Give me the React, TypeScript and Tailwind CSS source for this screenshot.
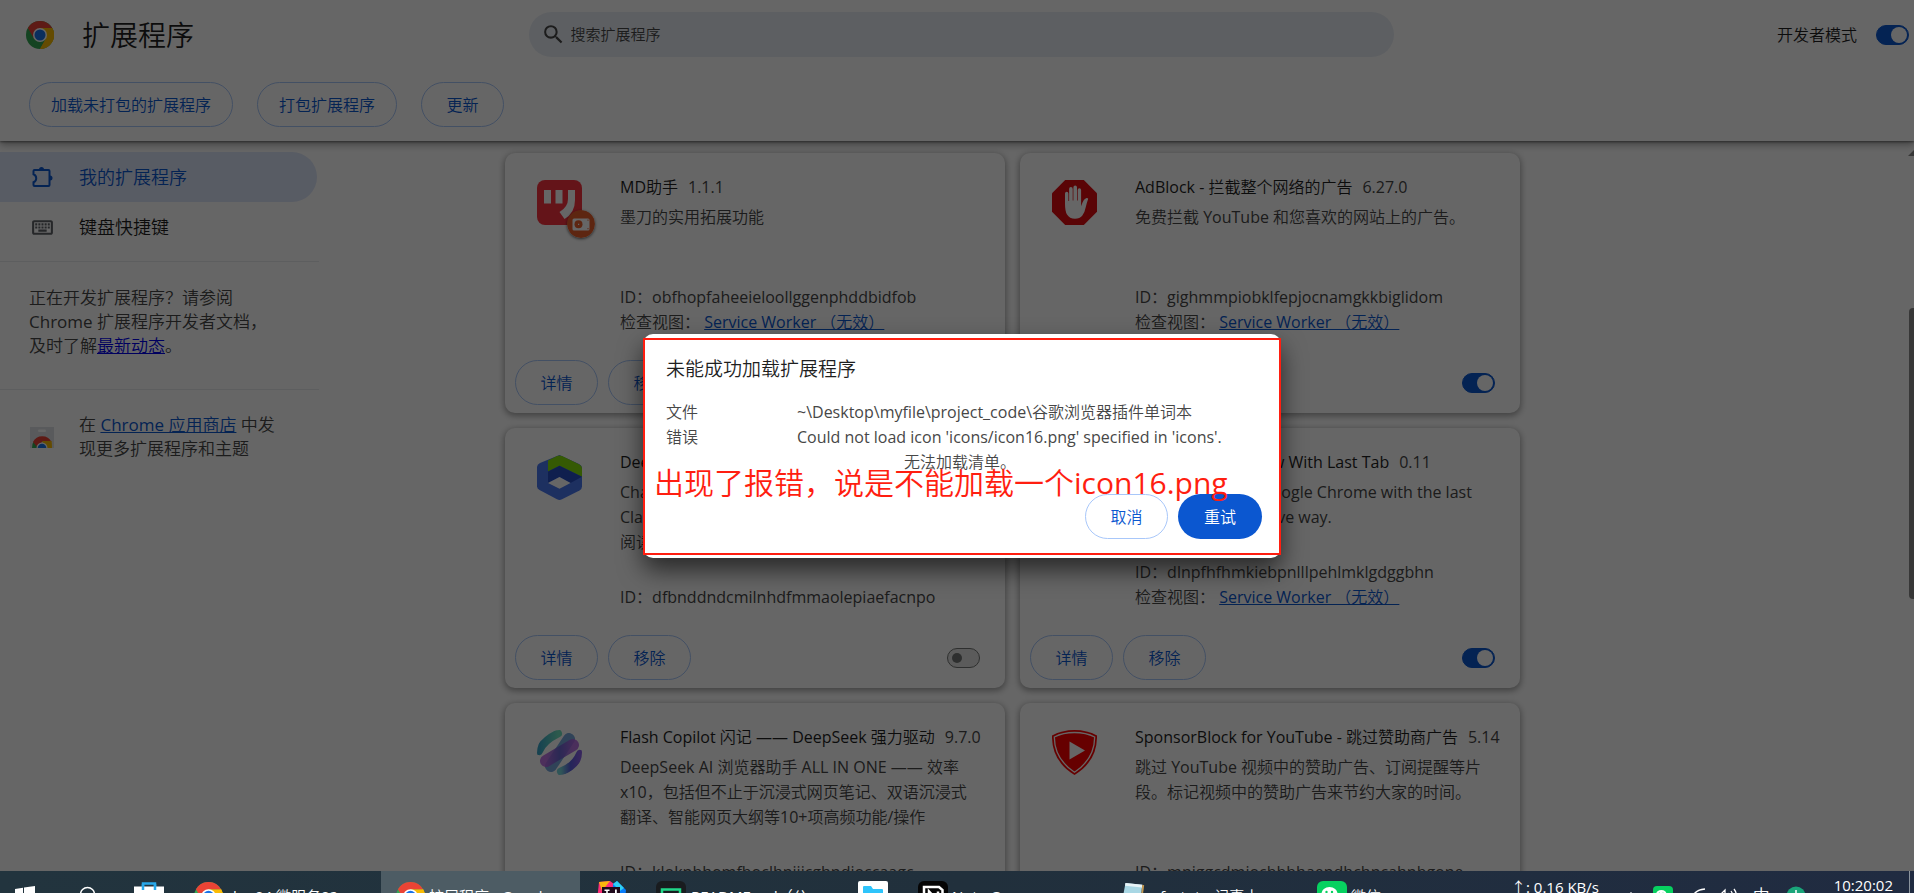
import React from "react";
import { MdSearch, MdOutlineKeyboard } from "react-icons/md";

function ChromeLogo({ className }: { className?: string }) {
  return (
    <svg viewBox="0 0 48 48" className={className} aria-hidden="true">
      <circle cx="24" cy="24" r="24" fill="#34a853" />
      <path d="M24 24 44.8 12A24 24 0 0 1 24 48L34.4 30Z" fill="#fbbc04" />
      <path d="M24 48 34.4 30 24 12H44.8A24 24 0 0 1 24 48Z" fill="#fbbc04" />
      <path d="M3.2 12A24 24 0 0 1 44.8 12H24L13.6 30Z" fill="#ea4335" />
      <circle cx="24" cy="24" r="12" fill="#fff" />
      <circle cx="24" cy="24" r="9.4" fill="#1a73e8" />
    </svg>
  );
}

function PuzzleIcon() {
  return (
    <svg viewBox="0 0 24 24" className="size-6" aria-hidden="true">
      <path
        d="M3.500 5H17.500Q18.500 5 18.500 6V20Q18.500 21 17.500 21H3.500Q2.500 21 2.500 20V17.200A4.300 4.300 0 0 0 2.500 9.200V6Q2.500 5 3.500 5Z"
        fill="none"
        stroke="#0b57d0"
        strokeWidth="2"
      />
      <path d="M8 4.500a2.500 2.500 0 0 1 5 0ZM19 10.500a2.500 2.500 0 0 1 0 5Z" fill="#0b57d0" />
    </svg>
  );
}

function StoreIcon() {
  return (
    <svg viewBox="0 0 24 21" className="h-[21px] w-6 shrink-0" aria-hidden="true">
      <rect width="24" height="21" fill="#dfe1e5" />
      <rect x="8" y="2.5" width="8" height="2.5" rx="1.2" fill="#fff" />
      <path d="M2 21a10 10 0 0 1 2-7l5 7Z" fill="#34a853" />
      <path d="M3 15a10.300 10.300 0 0 1 18.500 0H12L8 21Z" fill="#ea4335" />
      <path d="M12 14h9.500q.5 3 .5 7h-7Z" fill="#fbbc04" />
      <path d="M6.500 21a5.500 5.500 0 0 1 11 0Z" fill="#fff" />
      <path d="M7.700 21a4.300 4.300 0 0 1 8.600 0Z" fill="#1a73e8" />
    </svg>
  );
}

function ModaoIcon() {
  return (
    <div className="relative size-[45px]">
      <svg viewBox="0 0 45 45" className="size-[45px]" aria-hidden="true">
        <rect width="45" height="45" rx="8" fill="#fa3440" />
        <path d="M7 10h7v13.500H7ZM18.500 10h7v13.500h-7Z" fill="#fff" />
        <path d="M31 10h7v10q0 13-10.500 19l-5-7Q31 27 31 19Z" fill="#fff" />
      </svg>
      <svg
        viewBox="0 0 28 28"
        className="absolute -right-[13px] -bottom-[13px] size-7 rounded-full shadow-[0_1px_3px_rgba(0,0,0,.6)]"
        aria-hidden="true"
      >
        <circle cx="14" cy="14" r="14" fill="#e8602c" />
        <rect x="5.500" y="8.500" width="17" height="12" rx="1.500" fill="#fff" />
        <circle cx="11.500" cy="14.300" r="4" fill="#e8602c" />
        <path d="M11 13.800h1.200V15H11Z" fill="#fff" />
        <path d="M20.500 9.500h1v1.200h-1ZM20.500 18h1v1.200h-1Z" fill="#e8602c" />
      </svg>
    </div>
  );
}

function AdBlockIcon() {
  return (
    <svg viewBox="0 0 45 45" className="size-[45px]" aria-hidden="true">
      <path d="M13.200 0h18.600L45 13.200v18.600L31.800 45H13.200L0 31.800V13.200Z" fill="#e00a10" />
      <path
        d="M13 24V13.500q0-1.800 1.700-1.800t1.700 1.800V21h.7V9q0-1.900 1.800-1.900T20.700 9v11.500h.7V7.400q0-1.800 1.800-1.800T25 7.400v13.100h.7V10q0-1.800 1.700-1.800T29.100 10v16.200l1.400-3.600q1.300-3.600 3.500-4.400 1.700-.4 2.200.5-1.400 4-2.400 8.300-1 5.500-3.600 8.800-2.400 3-7.200 3-5.500 0-8-4.200Q13 31 13 24Z"
        fill="#fff"
      />
    </svg>
  );
}

function HexIcon() {
  return (
    <svg viewBox="0 0 45 45" className="size-[45px]" aria-hidden="true">
      <path d="M3 8 22.500 0 42 9q3 1.500 3 4v18.500q0 2.500-2.500 4L25 44.300q-2.500 1.200-5 0L2.500 35Q0 33.600 0 31.500V12q0-2.500 3-4Z" fill="#4a78f0" />
      <path d="M11 5.500 20 1q2.500-1.200 5 0l17.500 8.500q2.500 1.500 2.500 4v8.200L22.500 10.800 11 16.500Z" fill="#86e00a" />
      <path d="M11 16.500 22.500 10.800 45 21.700 33.500 28 22.500 22 11 28Z" fill="#274fc4" />
      <path d="M11 28 22.500 22l11 6-11 5.800Z" fill="#fff" />
    </svg>
  );
}

function FlashIcon() {
  return (
    <svg viewBox="0 0 45 45" className="size-[45px]" aria-hidden="true">
      <defs>
        <linearGradient id="fa" x1="0" x2="1">
          <stop offset="0" stopColor="#3aa6c9" />
          <stop offset="1" stopColor="#6fe0c0" />
        </linearGradient>
        <linearGradient id="fb" x1="0" x2="1">
          <stop offset="0" stopColor="#b65fe0" />
          <stop offset=".5" stopColor="#6a5bd0" />
          <stop offset="1" stopColor="#b05fe0" />
        </linearGradient>
        <linearGradient id="fc" x1="0" x2="1">
          <stop offset="0" stopColor="#78d6dc" />
          <stop offset=".5" stopColor="#5a5ce0" />
          <stop offset="1" stopColor="#8a60e8" />
        </linearGradient>
        <clipPath id="fd">
          <circle cx="22.500" cy="22.500" r="22.500" />
        </clipPath>
      </defs>
      <g clipPath="url(#fd)" fill="none" strokeLinecap="round">
        <path d="M2 21Q6 11 21 3.500" stroke="url(#fa)" strokeWidth="8" />
        <path d="M32 9 14 36" stroke="#78a9dc" strokeWidth="12" />
        <path d="M9 31 36 15" stroke="url(#fb)" strokeWidth="12" opacity=".85" />
        <path d="M24 41.500Q38 36 43 24" stroke="url(#fc)" strokeWidth="8" />
      </g>
    </svg>
  );
}

function TabIcon() {
  return (
    <svg viewBox="0 0 45 45" className="size-[45px]" aria-hidden="true">
      <circle cx="22.500" cy="22.500" r="22" fill="#4285f4" />
      <path d="M12 16h21v14H12Z" fill="#fff" />
    </svg>
  );
}

function ShieldIcon() {
  return (
    <svg viewBox="0 0 45 45" className="size-[45px]" aria-hidden="true">
      <path d="M22.500 0Q35 0 45 5.500 45.500 31 22.500 45-.5 31 0 5.500 10 0 22.500 0Z" fill="#f00" />
      <path
        d="M22.500 2.500Q34 2.500 42.700 7 42.500 29 22.500 42.300 2.500 29 2.300 7 11 2.500 22.500 2.500Z"
        fill="none"
        stroke="#fff"
        strokeWidth="1.300"
      />
      <path d="M17.500 11.500 33 20.500 17.500 29.500Z" fill="#fff" />
    </svg>
  );
}

function Toggle({ on, label }: { on: boolean; label: string }) {
  return (
    <input
      type="checkbox"
      defaultChecked={on}
      aria-label={label}
      className="relative h-5 w-[33px] shrink-0 appearance-none rounded-full border border-[#747775] bg-[#e3e3e3] before:absolute before:top-1 before:left-1 before:size-[10px] before:rounded-full before:bg-[#747775] checked:border-[#0b57d0] checked:bg-[#0b57d0] checked:before:top-[1px] checked:before:left-[14px] checked:before:size-4 checked:before:bg-white"
    />
  );
}

const pill =
  "h-[45px] min-w-[83px] shrink-0 rounded-full border border-[#a8c7fa] px-[21px] text-[16px] text-[#0b57d0]";

type Extension = {
  icon: React.ReactNode;
  name: string;
  version: string;
  lines: string[];
  id: string;
  worker: boolean;
  on: boolean;
};

const extensions: Extension[] = [
  {
    icon: <ModaoIcon />,
    name: "MD助手",
    version: "1.1.1",
    lines: ["墨刀的实用拓展功能"],
    id: "obfhopfaheeieloollggenphddbidfob",
    worker: true,
    on: true,
  },
  {
    icon: <AdBlockIcon />,
    name: "AdBlock - 拦截整个网络的广告",
    version: "6.27.0",
    lines: ["免费拦截 YouTube 和您喜欢的网站上的广告。"],
    id: "gighmmpiobklfepjocnamgkkbiglidom",
    worker: true,
    on: true,
  },
  {
    icon: <HexIcon />,
    name: "DeepSider",
    version: "1.0",
    lines: ["ChatGPT", "Claude", "阅读"],
    id: "dfbnddndcmilnhdfmmaolepiaefacnpo",
    worker: false,
    on: false,
  },
  {
    icon: <TabIcon />,
    name: "Don't Close Window With Last Tab",
    version: "0.11",
    lines: ["Prevents closing Google Chrome with the last", "tab in an unobtrusive way."],
    id: "dlnpfhfhmkiebpnlllpehlmklgdggbhn",
    worker: true,
    on: true,
  },
  {
    icon: <FlashIcon />,
    name: "Flash Copilot 闪记 —— DeepSeek 强力驱动",
    version: "9.7.0",
    lines: [
      "DeepSeek AI 浏览器助手 ALL IN ONE —— 效率",
      "x10，包括但不止于沉浸式网页笔记、双语沉浸式",
      "翻译、智能网页大纲等10+项高频功能/操作",
    ],
    id: "kloknbhomfboclhnijicghndjoccaagc",
    worker: false,
    on: true,
  },
  {
    icon: <ShieldIcon />,
    name: "SponsorBlock for YouTube - 跳过赞助商广告",
    version: "5.14",
    lines: ["跳过 YouTube 视频中的赞助广告、订阅提醒等片", "段。标记视频中的赞助广告来节约大家的时间。"],
    id: "mnjggcdmjocbbbhaepdhchncahnbgone",
    worker: false,
    on: true,
  },
];

function Card({ ext }: { ext: Extension }) {
  return (
    <article className="flex h-[260px] flex-col rounded-[10px] bg-white pb-2 shadow-[0_2px_6px_1px_rgba(0,0,0,.35)]">
      <div className="flex min-h-0 flex-1 pt-[27px] pl-8">
        <div className="w-[83px] shrink-0">{ext.icon}</div>
        <div className="-mt-[5px] flex min-w-0 flex-1 flex-col whitespace-nowrap pb-[25px] text-[16px] leading-[25px] text-[#474747]">
          <h2 className="flex gap-[10px]">
            <span className="text-[#1f1f1f]">{ext.name}</span>
            <span>{ext.version}</span>
          </h2>
          <div className="mt-[5px] flex-1">
            {ext.lines.map((line) => (
              <p key={line}>{line}</p>
            ))}
          </div>
          <p>ID：{ext.id}</p>
          {ext.worker && (
            <p>
              检查视图：{" "}
              <a href="#worker" className="text-[#0b57d0] underline">
                Service Worker （无效）
              </a>
            </p>
          )}
        </div>
      </div>
      <div className="flex items-center gap-[10px] pr-[25px] pl-[10px]">
        <button className={pill}>详情</button>
        <button className={pill}>移除</button>
        <div className="flex flex-1 justify-end">
          <Toggle on={ext.on} label={ext.name} />
        </div>
      </div>
    </article>
  );
}

function Task({ className, children }: { className: string; children: React.ReactNode }) {
  return <div className={"flex h-[50px] shrink-0 items-center whitespace-nowrap " + className}>{children}</div>;
}

function WeChatIcon({ className }: { className: string }) {
  return (
    <svg viewBox="0 0 30 30" className={className} aria-hidden="true">
      <rect width="30" height="30" rx="6" fill="#07d160" />
      <ellipse cx="12.500" cy="13" rx="8" ry="7" fill="#fff" />
      <circle cx="9.500" cy="11" r="1.200" fill="#07d160" />
      <circle cx="15" cy="11" r="1.200" fill="#07d160" />
      <ellipse cx="19" cy="18" rx="6.500" ry="5.500" fill="#fff" />
    </svg>
  );
}

function Taskbar() {
  return (
    <footer className="flex h-[22px] shrink-0 items-start overflow-hidden bg-linear-to-r from-[#22343e] via-[#21303c] to-[#202b41] text-[15px] text-white">
      <Task className="w-[50px] justify-center">
        <svg viewBox="0 0 20 20" className="size-5" fill="#fff" aria-hidden="true">
          <path d="M0 3 8 1.800V9.500H0ZM9 1.600 20 0V9.500H9ZM0 10.500h8v7.700L0 17ZM9 10.500h11V20L9 18.400Z" />
        </svg>
      </Task>
      <Task className="w-[74px] justify-center">
        <svg viewBox="0 0 20 20" className="size-5" aria-hidden="true">
          <circle cx="10.500" cy="8.500" r="7" fill="none" stroke="#fff" strokeWidth="1.500" />
        </svg>
      </Task>
      <Task className="w-[70px] pl-[10px]">
        <svg viewBox="0 0 30 30" className="size-[30px]" aria-hidden="true">
          <path d="M9 6V2.500h12V6" fill="none" stroke="#28a8ea" strokeWidth="2.500" />
          <path d="M0 5.500h30V27q0 2-2 2H2q-2 0-2-2Z" fill="#fff" />
          <path d="M9 9V3M21 9V3" stroke="#28a8ea" strokeWidth="2.500" />
        </svg>
      </Task>
      <Task className="w-[187px] gap-[10px]">
        <ChromeLogo className="size-[29px]" />
        <span>ku-04.微服务02</span>
      </Task>
      <Task className="w-[199px] gap-1 bg-[#4d5c64] pl-[15px]">
        <ChromeLogo className="size-[29px]" />
        <span>扩展程序 - Google</span>
      </Task>
      <Task className="w-[76px] pl-4">
        <svg viewBox="0 0 30 30" className="size-[30px]" aria-hidden="true">
          <path d="M3 1 14 0l8 6-6 24H0Z" fill="#fe2d78" />
          <path d="M3 1 14 0 6 10Z" fill="#fdb60d" />
          <path d="M17 3 21 0l9 9-2 21H16Z" fill="#087cfa" />
          <path d="M17 3 21 0l7 7-4 3Z" fill="#2fd0f5" />
          <path d="M6 6h18v18H6Z" fill="#200a1c" />
          <path d="M8.500 8.500h5v1.500h-1.700v5h1.700v1.500h-5V15h1.700v-5H8.500ZM19 8.500h1.800v5.500q0 2.500-2.600 2.500h-1.700V15h1.300q1.200 0 1.200-1.200Z" fill="#fff" />
        </svg>
      </Task>
      <Task className="w-[202px] gap-[5px]">
        <svg viewBox="0 0 30 30" className="size-[30px]" aria-hidden="true">
          <rect width="30" height="30" rx="6" fill="#191c1f" />
          <path d="M6 8.500h18V23H6Z" fill="none" stroke="#21d789" strokeWidth="2.500" />
          <path d="M8 14.500h14" stroke="#21d789" strokeWidth="2" />
        </svg>
        <span>README.md（公</span>
      </Task>
      <Task className="w-[60px]">
        <svg viewBox="0 0 30 30" className="size-[30px]" aria-hidden="true">
          <rect width="30" height="30" rx="2" fill="#fff" />
          <path d="M5 6q0-1 1-1h7l2 3h9q1 0 1 1v13q0 1-1 1H6q-1 0-1-1Z" fill="#2ec4fb" />
        </svg>
      </Task>
      <Task className="w-[202px] gap-1">
        <svg viewBox="0 0 30 30" className="size-[30px]" aria-hidden="true">
          <rect width="30" height="30" rx="6" fill="#050505" />
          <path d="M6 6h15l3.500 3v15H9L6 21Z" fill="none" stroke="#fff" strokeWidth="2.500" />
          <path d="M11 20v-9.500l9 9.500v-9.500" fill="none" stroke="#fff" strokeWidth="2.500" />
        </svg>
        <span>Note Ge</span>
      </Task>
      <Task className="w-[197px] gap-[15px]">
        <svg viewBox="0 0 25 30" className="h-[28px] w-[25px]" aria-hidden="true">
          <path d="M5 1 23 3 20 30 0 28Z" fill="#a9d7e4" />
          <path d="M5 1 23 3 22.700 6 4.500 4Z" fill="#e9f4f7" />
          <path d="M23 3l2 .5L21.500 30H20Z" fill="#c79a52" />
        </svg>
        <span>factoto-记事本</span>
      </Task>
      <Task className="w-[194px] gap-1">
        <WeChatIcon className="size-[30px]" />
        <span>微信</span>
      </Task>
      <div className="flex-1 pt-[5px] text-[15px] leading-[22px] whitespace-nowrap">↑: 0.16 KB/s</div>
      <Task className="gap-4 pr-7">
        <svg viewBox="0 0 12 20" className="h-5 w-3" aria-hidden="true">
          <path d="M2 11 6 7l4 4" fill="none" stroke="#fff" strokeWidth="1.500" />
        </svg>
        <WeChatIcon className="size-5" />
        <svg viewBox="0 0 20 20" className="-mr-2 size-5" aria-hidden="true">
          <path d="M3 14Q4 4 16 3M8 16Q9 9 16 8" fill="none" stroke="#fff" strokeWidth="1.500" />
        </svg>
        <svg viewBox="0 0 20 20" className="size-5" aria-hidden="true">
          <path d="M1 8h3l4-4v12l-4-4H1ZM11 7q2 3 0 6M14 5q3.500 5 0 10M17 3q5 7 0 14" fill="none" stroke="#fff" strokeWidth="1.300" />
        </svg>
        <span className="text-[17px]">中</span>
        <svg viewBox="0 0 20 20" className="size-5" aria-hidden="true">
          <circle cx="10" cy="10" r="9.500" fill="#1aa57a" />
          <path d="M10 4v12M7 7v6M13 7v6" stroke="#fff" strokeWidth="1.500" />
        </svg>
      </Task>
      <div className="flex h-full">
        <time className="border-r border-[#8b949e] pt-[3px] pr-4 text-[15px] leading-[22px]">10:20:02</time>
        <span className="w-1" />
      </div>
    </footer>
  );
}

function ErrorDialog() {
  return (
    <div className="absolute inset-0 z-20 flex items-start justify-center bg-black/60 pt-[334px] pl-[10px]">
      <div
        role="dialog"
        aria-labelledby="dialog-title"
        className="relative flex w-[638px] flex-col rounded-[10px] bg-white px-[23px] pt-[22px] pb-[19px] shadow-[0_12px_24px_rgba(0,0,0,.6)]"
      >
        <h2 id="dialog-title" className="text-[19px] leading-[26px] text-[#1f1f1f]">
          未能成功加载扩展程序
        </h2>
        <dl className="mt-[18px] grid grid-cols-[131px_1fr] text-[16px] leading-[25px] whitespace-nowrap text-[#474747]">
          <dt>文件</dt>
          <dd>~\Desktop\myfile\project_code\谷歌浏览器插件单词本</dd>
          <dt>错误</dt>
          <dd>
            Could not load icon 'icons/icon16.png' specified in 'icons'.
            <span className="block pl-[107px]">无法加载清单。</span>
          </dd>
        </dl>
        <div className="-mr-1 mt-[19px] flex justify-end gap-[10px]">
          <button className={pill}>取消</button>
          <button className="h-[45px] min-w-[84px] rounded-full bg-[#0b57d0] px-[21px] text-[16px] font-medium text-white">
            重试
          </button>
        </div>
        <div className="pointer-events-none absolute inset-x-0 top-1 bottom-[3px] border-2 border-[#ff1e10]" />
        <p className="pointer-events-none absolute top-[128px] left-[11px] text-[30px] leading-[42px] whitespace-nowrap text-[#ff1e10]">
          出现了报错，说是不能加载一个icon16.png
        </p>
      </div>
    </div>
  );
}

export default function App() {
  return (
    <div className="flex h-screen flex-col overflow-hidden bg-white font-['Open_Sans','Noto_Sans_CJK_SC_DemiLight','Noto_Sans_CJK_SC',sans-serif]">
      <div className="relative flex min-h-0 flex-1 flex-col overflow-hidden">
        <header className="relative z-10 shrink-0 bg-white pb-[14px] shadow-[0_1px_2px_rgba(0,0,0,.4),0_3px_8px_rgba(0,0,0,.4)]">
          <div className="flex items-center pt-3 pr-[5px] pl-[13px]">
            <div className="flex flex-1 items-center gap-7">
              <ChromeLogo className="ml-[13px] size-7" />
              <h1 className="text-[28px] leading-[40px] text-[#1f1f1f]">扩展程序</h1>
            </div>
            <label className="flex h-[45px] w-[865px] items-center gap-[5px] rounded-full bg-[#e9eef6] pl-3">
              <MdSearch className="size-[25px] text-[#474747]" />
              <input
                type="search"
                aria-label="搜索扩展程序"
                placeholder="搜索扩展程序"
                className="flex-1 bg-transparent text-[15px] outline-none placeholder:text-[#474747]"
              />
            </label>
            <div className="flex flex-1 items-center justify-end gap-[19px] text-[16px] text-[#1f1f1f]">
              <span>开发者模式</span>
              <Toggle on label="开发者模式" />
            </div>
          </div>
          <div className="mt-[25px] flex gap-6 pl-[29px]">
            <button className={pill}>加载未打包的扩展程序</button>
            <button className={pill}>打包扩展程序</button>
            <button className={pill}>更新</button>
          </div>
        </header>

        <div className="flex min-h-0 flex-1">
          <aside className="w-[319px] shrink-0 pt-[11px] text-[17px] leading-6 text-[#474747]">
            <nav className="text-[18px] text-[#1f1f1f]">
              <a
                href="#extensions"
                className="mr-[2px] flex h-[50px] items-center gap-6 rounded-r-full bg-[#dde6fa] pl-[31px] text-[#0b57d0]"
              >
                <PuzzleIcon />
                我的扩展程序
              </a>
              <a href="#shortcuts" className="flex h-[50px] items-center gap-6 pl-[30px]">
                <MdOutlineKeyboard className="size-[25px] text-[#5f6368]" />
                键盘快捷键
              </a>
            </nav>
            <p className="mt-[9px] border-t border-[#e8eaed] pt-6 pb-[31px] pl-[29px] whitespace-nowrap">
              正在开发扩展程序？请参阅
              <br />
              Chrome 扩展程序开发者文档，
              <br />
              及时了解
              <a href="#news" className="text-[#0000ee] underline">
                最新动态
              </a>
              。
            </p>
            <div className="flex items-center gap-[25px] border-t border-[#e8eaed] pt-[23px] pl-[30px]">
              <StoreIcon />
              <p className="whitespace-nowrap">
                在{" "}
                <a href="#store" className="text-[#0b57d0] underline">
                  Chrome 应用商店
                </a>{" "}
                中发
                <br />
                现更多扩展程序和主题
              </p>
            </div>
          </aside>
          <main className="min-w-0 flex-1 overflow-hidden pt-3 pl-[186px]">
            <div className="grid grid-cols-[500px_500px] gap-[15px]">
              {extensions.map((ext) => (
                <Card key={ext.id} ext={ext} />
              ))}
            </div>
          </main>
          <div className="flex w-[6px] shrink-0 flex-col items-end pt-[9px]" aria-hidden="true">
            <svg viewBox="0 0 6 6" className="size-[6px]" fill="#8b8b8b">
              <path d="M0 6 6 0V6Z" />
            </svg>
            <div className="mt-[152px] h-[291px] w-[5px] rounded-l bg-[#8b8b8b]" />
          </div>
        </div>
        <ErrorDialog />
      </div>
      <Taskbar />
    </div>
  );
}
